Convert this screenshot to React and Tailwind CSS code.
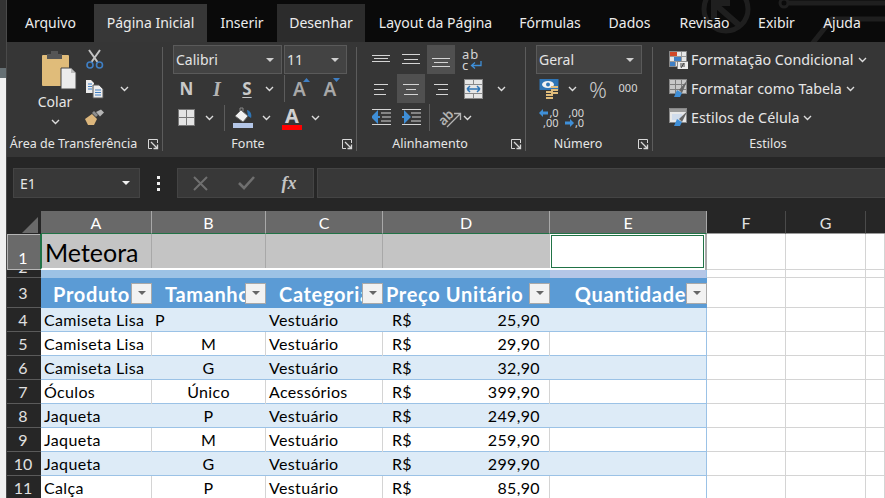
import { Fragment } from "react";

const sheetCols = "grid grid-cols-[34px_111px_114px_117px_167px_157px_79px_80px_1fr]";

const tabs = [
  { label: "Arquivo", w: "w-[87px]" },
  { label: "Página Inicial", w: "w-[113px]", bg: "bg-[#373737]" },
  { label: "Inserir", w: "w-[70px]" },
  { label: "Desenhar", w: "w-[88px]", bg: "bg-[#2c2c2c]" },
  { label: "Layout da Página", w: "w-[141px]" },
  { label: "Fórmulas", w: "w-[88px]" },
  { label: "Dados", w: "w-[71px]" },
  { label: "Revisão", w: "w-[79px]" },
  { label: "Exibir", w: "w-[65px]" },
  { label: "Ajuda", w: "w-[66px]" },
];

const rows = [
  { n: 4, a: "Camiseta Lisa", b: "P", c: "Vestuário", d: "25,90", left: true },
  { n: 5, a: "Camiseta Lisa", b: "M", c: "Vestuário", d: "29,90" },
  { n: 6, a: "Camiseta Lisa", b: "G", c: "Vestuário", d: "32,90" },
  { n: 7, a: "Óculos", b: "Único", c: "Acessórios", d: "399,90" },
  { n: 8, a: "Jaqueta", b: "P", c: "Vestuário", d: "249,90" },
  { n: 9, a: "Jaqueta", b: "M", c: "Vestuário", d: "259,90" },
  { n: 10, a: "Jaqueta", b: "G", c: "Vestuário", d: "299,90" },
  { n: 11, a: "Calça", b: "P", c: "Vestuário", d: "85,90" },
];

const Chevron = () => (
  <svg width="9" height="6" viewBox="0 0 9 6" fill="none" stroke="#dcdcdc" strokeWidth="1.4" className="shrink-0">
    <path d="M1 1l3.5 3.5L8 1" />
  </svg>
);

const Caret = ({ color = "#cfcfcf" }) => (
  <svg width="8" height="4" viewBox="0 0 8 4" fill={color} className="shrink-0">
    <path d="M0 0h8L4 4z" />
  </svg>
);

const Launcher = () => (
  <svg width="12" height="12" viewBox="0 0 12 12" fill="none" stroke="#d8d8d8" strokeWidth="1">
    <path d="M10.5 5V1.5H1.5v9H5" />
    <path d="M4 4l6 6M10.5 6.5v4h-4" strokeWidth="1.3" />
  </svg>
);

const Lines = ({ rows: lineRows, w = 20, h = 20 }) => (
  <svg width={w} height={h} viewBox={`0 0 ${w} ${h}`} stroke="#d4d4d4" strokeWidth="1" shapeRendering="crispEdges">
    {lineRows.map(([x1, x2, y], i) => (
      <line key={i} x1={x1} x2={x2} y1={y + 0.5} y2={y + 0.5} />
    ))}
  </svg>
);

const PasteIcon = () => (
  <svg width="36" height="40" viewBox="0 0 36 40" className="ml-[8px] shrink-0">
    <rect x="1" y="5" width="27" height="31" rx="1" fill="#e0bc7a" />
    <path d="M6 9V4h4V1h7v3h4v5z" fill="#555" />
    <path d="M20 18h10l5 5v16H20z" fill="#ececec" stroke="#444" strokeWidth="1" />
    <path d="M30 18v5h5" fill="#bbb" />
  </svg>
);

const ScissorsIcon = () => (
  <svg width="20" height="22" viewBox="0 0 20 22" fill="none">
    <path d="M15 1L6.5 13M4 1l8.5 12" stroke="#c4c4c4" strokeWidth="2" />
    <circle cx="5" cy="16" r="3" stroke="#3f7fc4" strokeWidth="1.6" />
    <circle cx="14.5" cy="16" r="3" stroke="#3f7fc4" strokeWidth="1.6" />
  </svg>
);

const CopyIcon = () => (
  <svg width="20" height="20" viewBox="0 0 20 20">
    <path d="M1 1h5l3 3v10H1z" fill="#ececec" />
    <path d="M3 5h4M3 7.5h4M3 10h4" stroke="#3f7fc4" />
    <path d="M8 6h6l4 4v9H8z" fill="#ececec" stroke="#555" />
    <path d="M10 11h6M10 13.5h6M10 16h6" stroke="#3f7fc4" />
  </svg>
);

const BrushIcon = () => (
  <svg width="20" height="17" viewBox="0 0 20 17">
    <path d="M0 10l7-5 5 5-3 6H3z" fill="#dcb67c" />
    <path d="M7 4l2-2 4 4-2 2z" fill="#8d8d8d" />
    <path d="M11 3l5-2.500 3 3-4 4z" fill="#b5b5b5" />
  </svg>
);

const BordersIcon = () => (
  <svg width="17" height="17" viewBox="0 0 17 17" shapeRendering="crispEdges">
    <rect x="0.500" y="0.500" width="16" height="16" fill="#e4e4e4" stroke="#777" />
    <path d="M8.500 1v15M1 8.500h15" stroke="#777" strokeWidth="1.500" />
  </svg>
);

const FillIcon = () => (
  <svg width="21" height="21" viewBox="0 0 21 21">
    <path d="M2 9l6-6 7 6-5 6z" fill="#f0f0f0" stroke="#666" />
    <path d="M7 4V1h3v3" fill="none" stroke="#888" />
    <path d="M14 3c4 1 5 5 4 8l-3-2z" fill="#2f75b5" />
    <rect x="0" y="16" width="20" height="5" fill="#b4c6e7" />
  </svg>
);

const FontColorIcon = () => (
  <div className="flex w-[20px] flex-col items-center">
    <span className="text-[20px] leading-[19px] font-bold text-[#d0d0d0]">A</span>
    <span className="h-[5px] w-[20px] bg-[#ff0000]" />
  </div>
);

const GrowFont = ({ down }) => (
  <span className="flex items-start">
    <span className="text-[19px] leading-[22px] font-semibold text-[#a8a8a8]">A</span>
    <svg width="7" height="4" viewBox="0 0 7 4" fill="#3f7fc4" className="-ml-[3px] shrink-0">
      <path d={down ? "M0 0h7L3.500 4z" : "M0 4h7L3.500 0z"} />
    </svg>
  </span>
);

const WrapIcon = () => (
  <div className="flex w-[22px] flex-col text-[13px] leading-[11px] tracking-[1px] text-[#d4d4d4]">
    <span>ab</span>
    <span className="flex items-center">
      c
      <svg width="12" height="9" viewBox="0 0 12 9" fill="none" stroke="#3f8fd8" strokeWidth="1.300" className="ml-[1px] shrink-0">
        <path d="M11 0v4.500H2M5 1.500L1.500 4.500 5 7.500" />
      </svg>
    </span>
  </div>
);

const MergeIcon = () => (
  <svg width="19" height="20" viewBox="0 0 19 20" shapeRendering="crispEdges">
    <rect x="0.500" y="0.500" width="18" height="19" fill="#e6e6e6" stroke="#888" />
    <path d="M1 5.500h17M1 14.500h17M9.500 1v4M9.500 15v4" stroke="#888" />
    <path d="M3 10h13M3 10l3-3M3 10l3 3M16 10l-3-3M16 10l-3 3" stroke="#2f75b5" strokeWidth="1.500" fill="none" shapeRendering="auto" />
  </svg>
);

const IndentIcon = ({ flip }) => (
  <svg width="19" height="17" viewBox="0 0 19 17" fill="none">
    <path d="M0 .5h19M0 15.500h19M9 4h10M10 8h9M9 12h10" stroke="#d4d4d4" />
    {flip ? (
      <path d="M0 8h5M3 3.500l4.500 4.500L3 12.500z" stroke="#3f8fd8" strokeWidth="2" fill="#3f8fd8" />
    ) : (
      <path d="M8 8H3M5 3.500L.5 8 5 12.500z" stroke="#3f8fd8" strokeWidth="2" fill="#3f8fd8" />
    )}
  </svg>
);

const OrientIcon = () => (
  <span className="flex items-center">
    <span className="-mr-[9px] -rotate-45 text-[13px] leading-[13px] font-semibold text-[#b4b4b4]">ab</span>
    <svg width="17" height="17" viewBox="0 0 17 17" fill="none" stroke="#b4b4b4" strokeWidth="1.300" className="mt-[3px] shrink-0">
      <path d="M2 16L15 3M9 2.500h6.500V9" />
    </svg>
  </span>
);

const CurrencyIcon = () => (
  <svg width="20" height="20" viewBox="0 0 20 20">
    <rect x="0.500" y="0" width="19" height="11" fill="#2f75b5" />
    <ellipse cx="9" cy="5.500" rx="6" ry="3.500" fill="#f2f2f2" />
    <circle cx="9" cy="5.500" r="2" fill="#2f75b5" />
    <path d="M12 7h7v2h-7zM12 10h7v2h-7zM12 13h7v2h-7zM7 12h7v2H7zM7 15h7v2H7zM7 18h7v2H7z" fill="#e0bc7a" />
  </svg>
);

const DecimalIcon = ({ top, bottom, arrowTop }) => (
  <div className="flex flex-col items-end text-[11px] leading-[10px] text-[#d8d8d8]">
    <span className="flex items-center gap-[1px]">
      {arrowTop && <svg width="9" height="8" viewBox="0 0 9 8" fill="#3f8fd8"><path d="M0 4l4-4v2.500h5v3H4V8z" /></svg>}
      {top}
    </span>
    <span className="flex items-center gap-[1px]">
      {!arrowTop && <svg width="9" height="8" viewBox="0 0 9 8" fill="#3f8fd8"><path d="M9 4L5 0v2.500H0v3h5V8z" /></svg>}
      {bottom}
    </span>
  </div>
);

const ConditionalIcon = () => (
  <svg width="19" height="18" viewBox="0 0 19 18" shapeRendering="crispEdges">
    <rect x="0.500" y="0.500" width="17" height="15" fill="#e6e6e6" stroke="#888" />
    <path d="M6 1v15M12 1v15M1 5.500h16M1 10.500h16" stroke="#999" />
    <rect x="1" y="1" width="7" height="4" fill="#d0492a" />
    <rect x="5" y="6" width="7" height="4" fill="#3f7fc4" />
    <rect x="1" y="11" width="5" height="4" fill="#3f7fc4" />
    <rect x="8" y="10" width="11" height="8" fill="#ececec" stroke="#888" />
    <path d="M11 13h5M11 15h5M15 12l-3 5" stroke="#444" shapeRendering="auto" />
  </svg>
);

const TableStyleIcon = () => (
  <svg width="19" height="19" viewBox="0 0 19 19">
    <g shapeRendering="crispEdges">
      <rect x="0.500" y="0.500" width="17" height="14" fill="#c8c8c8" stroke="#888" />
      <path d="M6 1v14M12 1v14M1 5.500h16M1 10.500h16" stroke="#7f7f7f" />
    </g>
    <path d="M18.500 1L10 11l3 3z" fill="#666" />
    <path d="M5 18l3-7 5 3-2 4z" fill="#3f8fd8" />
  </svg>
);

const CellStyleIcon = () => (
  <svg width="19" height="19" viewBox="0 0 19 19">
    <g shapeRendering="crispEdges">
      <rect x="0.500" y="0.500" width="17" height="14" fill="#e8e8e8" stroke="#888" />
      <rect x="1" y="1" width="16" height="3" fill="#9a9a9a" />
      <rect x="3" y="6" width="10" height="6" fill="#d0dcec" />
    </g>
    <path d="M18.500 3L10 11l3 3z" fill="#666" />
    <path d="M5 18l3-7 5 3-2 4z" fill="#3f8fd8" />
  </svg>
);

const Btn = ({ w = "w-[28px]", active, className = "", children }) => (
  <div className={`flex h-[29px] shrink-0 items-center justify-center ${w} ${active ? "bg-[#505050]" : ""} ${className}`}>{children}</div>
);

const Combo = ({ w, text, mr = "" }) => (
  <div className={`flex h-[29px] items-center justify-between border border-[#5a5a5a] bg-[#434343] pr-[7px] pl-[2px] font-['Noto_Sans',sans-serif] text-[14px] text-[#e4e4e4] ${w} ${mr}`}>
    {text}
    <Caret />
  </div>
);

const GroupLabel = ({ w, text, launcher, ml = "" }) => (
  <div className="mt-[2px] flex h-[20px] items-center">
    <span className={`text-center text-[12.5px] text-[#e6e6e6] ${w}`}>{text}</span>
    {launcher && <span className={`flex ${ml}`}><Launcher /></span>}
  </div>
);

const StyleRow = ({ icon, text }) => (
  <div className="flex h-[29px] items-center">
    <span className="flex w-[25px] justify-center">{icon}</span>
    <span className="mr-[4px] text-[14.3px] whitespace-nowrap text-[#e6e6e6]">{text}</span>
    <Chevron />
  </div>
);

const Ribbon = () => (
  <div className="flex h-[115px] bg-[#363636] pt-[5px] font-['Noto_Sans',sans-serif]">
    {/* area de transferencia */}
    <div className="h-[104px] w-[156px] border-r border-[#5c5c5c]">
      <div className="-mt-[2px] flex h-[87px]">
        <div className="flex w-[73px] flex-col items-center pt-[5px] pl-[23px]">
          <PasteIcon />
          <span className="mt-[2px] text-[14px] leading-[20px] text-[#e6e6e6]">Colar</span>
          <span className="mt-[7px] flex"><Chevron /></span>
        </div>
        <div className="flex w-[30px] flex-col">
          <Btn w="w-[30px]"><ScissorsIcon /></Btn>
          <Btn w="w-[30px]"><CopyIcon /></Btn>
          <Btn w="w-[30px]"><BrushIcon /></Btn>
        </div>
        <div className="flex h-[87px] w-[28px] items-center justify-center"><Chevron /></div>
      </div>
      <GroupLabel w="w-[133px]" text="Área de Transferência" launcher ml="ml-[7px]" />
    </div>

    {/* fonte */}
    <div className="h-[104px] w-[194px] border-r border-[#5c5c5c]">
      <div className="-mt-[2px] pl-[10px]">
        <div className="flex gap-[2px]">
          <Combo w="w-[109px]" text="Calibri" />
          <Combo w="w-[63px]" text="11" />
        </div>
        <div className="flex h-[29px] items-center">
          <Btn w="w-[27px]"><span className="text-[17px] font-bold text-[#c9c9c9]">N</span></Btn>
          <Btn w="w-[34px]"><span className="font-['Liberation_Serif',serif] text-[20px] font-bold text-[#b4b4b4] italic">I</span></Btn>
          <Btn w="w-[26px]"><span className="text-[17px] leading-[19px] font-bold text-[#c9c9c9] underline underline-offset-2">S</span></Btn>
          <Btn w="w-[18px]"><Chevron /></Btn>
          <span className="ml-[6px] h-[27px] border-l border-[#5c5c5c]" />
          <Btn w="w-[33px]"><GrowFont /></Btn>
          <Btn w="w-[28px]"><GrowFont down /></Btn>
        </div>
        <div className="flex h-[29px] items-center">
          <Btn w="w-[27px]"><BordersIcon /></Btn>
          <Btn w="w-[18px]"><Chevron /></Btn>
          <span className="ml-[6px] h-[26px] border-l border-[#5c5c5c]" />
          <Btn w="w-[36px]"><FillIcon /></Btn>
          <Btn w="w-[10px]"><Chevron /></Btn>
          <Btn w="w-[36px]" className="ml-[3px]"><FontColorIcon /></Btn>
          <Btn w="w-[10px]"><Chevron /></Btn>
        </div>
      </div>
      <GroupLabel w="w-[170px]" text="Fonte" launcher ml="ml-[8px]" />
    </div>

    {/* alinhamento */}
    <div className="h-[104px] w-[169px] border-r border-[#5c5c5c]">
      <div className="-mt-[2px] pl-[10px]">
        <div className="flex gap-[2px]">
          <Btn><Lines rows={[[1, 19, 5], [3, 17, 8], [1, 19, 11]]} /></Btn>
          <Btn><Lines rows={[[1, 19, 4], [3, 17, 9], [1, 19, 13]]} /></Btn>
          <Btn active><Lines rows={[[1, 19, 8], [3, 17, 12], [1, 19, 16]]} /></Btn>
          <Btn w="w-[32px]"><WrapIcon /></Btn>
        </div>
        <div className="flex gap-[2px]">
          <Btn><Lines rows={[[3, 17, 5], [3, 13, 10], [3, 15, 15]]} /></Btn>
          <Btn active><Lines rows={[[2, 18, 5], [5, 15, 10], [3, 17, 15]]} /></Btn>
          <Btn><Lines rows={[[3, 17, 5], [7, 17, 10], [5, 17, 15]]} /></Btn>
          <Btn w="w-[32px]"><MergeIcon /></Btn>
          <Btn w="w-[20px]"><Chevron /></Btn>
        </div>
        <div className="flex items-center gap-[2px]">
          <Btn><IndentIcon /></Btn>
          <Btn><IndentIcon flip /></Btn>
          <span className="ml-[2px] h-[27px] border-l border-[#5c5c5c]" />
          <Btn w="w-[26px]" className="ml-[5px]"><OrientIcon /></Btn>
          <Btn w="w-[10px]" className="-ml-[3px]"><Chevron /></Btn>
        </div>
      </div>
      <GroupLabel w="w-[146px]" text="Alinhamento" launcher ml="ml-[7px]" />
    </div>

    {/* numero */}
    <div className="h-[104px] w-[127px] border-r border-[#5c5c5c]">
      <div className="-mt-[2px] pl-[10px]">
        <Combo w="w-[106px]" text="Geral" />
        <div className="flex h-[29px] items-center">
          <Btn w="w-[26px]"><CurrencyIcon /></Btn>
          <Btn w="w-[20px]"><Chevron /></Btn>
          <Btn w="w-[32px]"><span className="text-[22px] leading-[24px] font-light text-[#c9c9c9]">%</span></Btn>
          <Btn w="w-[28px]"><span className="text-[11px] text-[#d8d8d8]">000</span></Btn>
        </div>
        <div className="flex h-[29px] items-center">
          <Btn w="w-[26px]"><DecimalIcon top=",0" bottom=",00" arrowTop /></Btn>
          <Btn w="w-[25px]"><DecimalIcon top=",00" bottom=",0" /></Btn>
        </div>
      </div>
      <GroupLabel w="w-[104px]" text="Número" launcher ml="ml-[7px]" />
    </div>

    {/* estilos */}
    <div className="h-[104px] flex-1">
      <div className="-mt-[2px] pl-[13px]">
        <StyleRow icon={<ConditionalIcon />} text="Formatação Condicional" />
        <StyleRow icon={<TableStyleIcon />} text="Formatar como Tabela" />
        <StyleRow icon={<CellStyleIcon />} text="Estilos de Célula" />
      </div>
      <GroupLabel w="w-[230px]" text="Estilos" />
    </div>
  </div>
);

const FormulaBar = () => (
  <div className="flex h-[54px] items-center bg-[#262626] pb-[2px] pl-[6px] font-['Noto_Sans',sans-serif]">
    <div className="flex h-[30px] w-[127px] items-center justify-between border border-[#444] bg-[#383838] pr-[9px] pl-[6px] text-[14px] text-[#e6e6e6]">
      E1
      <Caret color="#f0f0f0" />
    </div>
    <div className="flex w-[37px] flex-col items-center gap-[3px]">
      <span className="h-[3px] w-[3px] bg-[#f0f0f0]" />
      <span className="h-[3px] w-[3px] bg-[#f0f0f0]" />
      <span className="h-[3px] w-[3px] bg-[#f0f0f0]" />
    </div>
    <div className="flex h-[30px] w-[137px] items-center border border-[#444] bg-[#383838]">
      <span className="flex w-[45px] justify-center">
        <svg width="15" height="15" viewBox="0 0 15 15" stroke="#6f6f6f" strokeWidth="2"><path d="M1 1l13 13M14 1L1 14" /></svg>
      </span>
      <span className="flex w-[46px] justify-center">
        <svg width="17" height="14" viewBox="0 0 17 14" fill="none" stroke="#6f6f6f" strokeWidth="2.600"><path d="M1 7l5 5L16 1" /></svg>
      </span>
      <span className="w-[40px] text-center font-['Liberation_Serif',serif] text-[18px] font-bold text-[#c4c4c4] italic">fx</span>
    </div>
    <div className="ml-[3px] h-[30px] flex-1 border-y border-l border-[#444] bg-[#383838]" />
  </div>
);

const ColHead = ({ text, on }) => (
  <div className={`flex h-[23px] items-center justify-center border-r border-b pt-[1px] text-[16px] ${on ? "border-r-[#a8a8a8] border-b-[#217346] bg-[#696969] text-white" : "border-r-[#4a4a4a] border-b-[#9a9a9a] text-[#e0e0e0]"}`}>
    {text}
  </div>
);

const RowHead = ({ children, h, on }) => (
  <div className={`flex items-center justify-center border-b ${h} ${on ? "items-end border border-[#b5b5b5] bg-[#6a6a6a] text-white" : "border-[#5a5a5a] bg-[#262626] text-[#e0e0e0]"} overflow-hidden pr-[2px] text-[16px] leading-[22px]`}>
    {children}
  </div>
);

const FilterBtn = () => (
  <span className="flex h-[21px] w-[21px] shrink-0 items-center justify-center border border-[#a9a9a9] bg-[#f2f2f2]">
    <Caret color="#666" />
  </span>
);

const HeadCell = ({ text, justify = "justify-center", pr = "" }) => (
  <div className="flex h-full items-center overflow-hidden">
    <span className={`flex min-w-0 flex-1 overflow-hidden pt-[1px] text-[20px] font-bold tracking-[0.65px] whitespace-nowrap text-white ${justify} ${pr}`}>{text}</span>
    <FilterBtn />
  </div>
);

const GridTail = ({ h }) => (
  <Fragment>
    <div className={`border-r border-b border-[#d4d4d4] bg-white ${h}`} />
    <div className={`border-r border-b border-[#d4d4d4] bg-white ${h}`} />
    <div className={`border-r border-b border-[#d4d4d4] bg-white ${h}`} />
  </Fragment>
);

const Sheet = () => (
  <div className="font-['Lato',sans-serif]">
    <div className={`${sheetCols} bg-[#262626]`}>
      <div className="flex h-[23px] items-end justify-end pr-[3px] pb-[1px]">
        <svg width="16" height="16" viewBox="0 0 16 16" fill="#6a6a6a"><path d="M16 0v16H0z" /></svg>
      </div>
      <ColHead text="A" on />
      <ColHead text="B" on />
      <ColHead text="C" on />
      <ColHead text="D" on />
      <ColHead text="E" on />
      <ColHead text="F" />
      <ColHead text="G" />
      <div className="h-[23px] border-b border-[#9a9a9a]" />
    </div>

    <div className={sheetCols}>
      <RowHead h="h-[36px]" on>1</RowHead>
      <div className="col-span-4 -ml-[1px] grid h-[36px] grid-cols-[110px_114px_117px_1fr] border-b-2 border-l-2 border-white border-l-[#217346] bg-[#c4c4c4]">
        <div className="flex h-full items-center border-r border-[#a8a8a8] pt-[3px] pl-[3px] text-[25px] leading-none text-black">Meteora</div>
        <div className="border-r border-[#a8a8a8]" />
        <div className="border-r border-[#a8a8a8]" />
        <div />
      </div>
      <div className="flex h-[36px] border-r-2 border-[#a8a8a8] bg-white p-[1px] pb-[2px]">
        <div className="flex-1 border border-[#217346]" />
      </div>
      <GridTail h="h-[36px]" />
    </div>

    <div className={sheetCols}>
      <RowHead h="h-[8px]"><span className="-mt-[14px]">2</span></RowHead>
      <div className="col-span-4 h-[8px] bg-[#9cc2e5]" />
      <div className="h-[8px] border-r border-[#9bc2e6] bg-[#b4c6e7]" />
      <GridTail h="h-[8px]" />
    </div>

    <div className={sheetCols}>
      <RowHead h="h-[30px]">3</RowHead>
      <div className="col-span-5 grid h-[30px] grid-cols-[111px_114px_117px_167px_157px] items-center bg-[#5b9bd5]">
        <HeadCell text="Produto" justify="justify-end" pr="pr-[1px]" />
        <HeadCell text="Tamanho" justify="justify-start" pr="pl-[13px]" />
        <HeadCell text="Categoria" justify="justify-start" pr="pl-[13px]" />
        <HeadCell text="Preço Unitário" justify="justify-start" pr="pl-[3px]" />
        <HeadCell text="Quantidade" justify="justify-end" />
      </div>
      <GridTail h="h-[30px]" />
    </div>

    {rows.map((r, i) => (
      <div key={r.n} className={sheetCols}>
        <RowHead h="h-[24px]">{r.n}</RowHead>
        <div className={`col-span-5 grid h-[24px] grid-cols-[111px_114px_117px_167px_157px] items-center border-r border-b border-[#9bc2e6] text-[16px] tracking-[0.35px] text-black ${i % 2 === 0 ? "bg-[#ddebf7]" : "bg-white"}`}>
          <div className={`flex h-full items-center border-r pb-[1px] pl-[3px] whitespace-nowrap ${i % 2 === 0 ? "border-transparent" : "border-[#d4d4d4]"}`}>{r.a}</div>
          <div className={`flex h-full items-center border-r pb-[1px] ${r.left ? "pl-[3px]" : "justify-center"} ${i % 2 === 0 ? "border-transparent" : "border-[#d4d4d4]"}`}>{r.b}</div>
          <div className={`flex h-full items-center border-r pb-[1px] pl-[3px] ${i % 2 === 0 ? "border-transparent" : "border-[#d4d4d4]"}`}>{r.c}</div>
          <div className={`flex h-full items-center justify-between border-r pr-[9px] pb-[1px] pl-[9px] ${i % 2 === 0 ? "border-transparent" : "border-[#d4d4d4]"}`}>
            <span>R$</span>
            <span>{r.d}</span>
          </div>
          <div />
        </div>
        <GridTail h="h-[24px]" />
      </div>
    ))}
  </div>
);

const App = () => {
  return (
    <div className="flex h-[498px] w-[885px] overflow-hidden bg-[#262626]">
      <div className="flex w-[7px] flex-col border-r border-[#4a4a4a]">
        <div className="h-[68px] bg-[#333]" />
        <div className="h-[10px] bg-[#667074]" />
        <div className="flex-1 bg-[#f0f0f0]" />
      </div>
      <div className="min-w-0 flex-1">
        <div className="relative flex h-[42px] items-end bg-[#0a0a0a] pt-[4px] font-['Noto_Sans',sans-serif]">
          <svg width="185" height="42" viewBox="0 0 185 42" fill="none" stroke="#1f1f1f" className="absolute top-0 right-0">
            <circle cx="26" cy="9" r="22" strokeWidth="5" />
            <path d="M40 26L17 6M14 19V3h16" strokeWidth="6" />
            <circle cx="84" cy="3" r="4" strokeWidth="3" />
            <path d="M89 3h96" strokeWidth="5" />
            <path d="M112 44l20-25h53" strokeWidth="5" />
          </svg>
          {tabs.map((t) => (
            <div key={t.label} className={`relative flex h-[38px] items-center justify-center pb-[1px] text-[14px] text-[#ececec] ${t.w} ${t.bg || ""}`}>
              {t.label}
            </div>
          ))}
        </div>
        <Ribbon />
        <FormulaBar />
        <Sheet />
      </div>
    </div>
  );
};

export default App;
